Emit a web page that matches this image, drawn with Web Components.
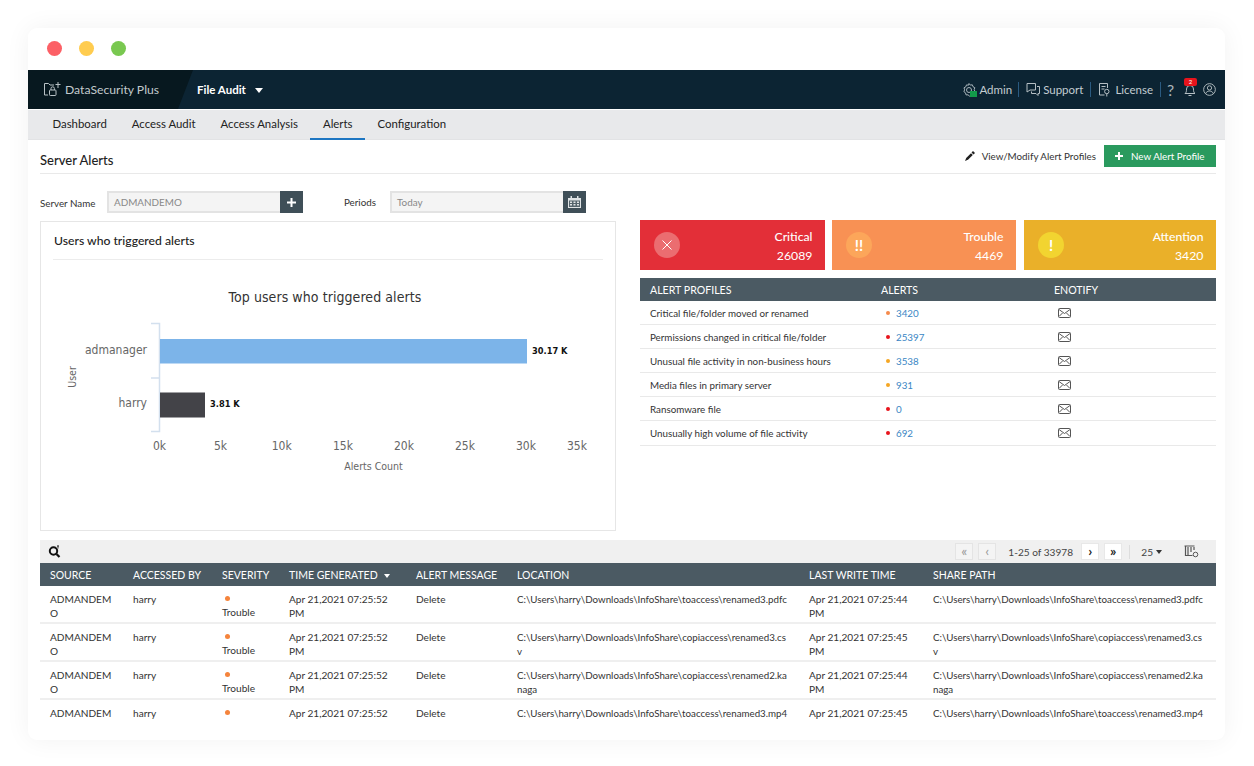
<!DOCTYPE html>
<html lang="en"><head><meta charset="utf-8"><title>DataSecurity Plus</title>
<style>
html,body{margin:0;background:#fff;font-family:Lato,"Liberation Sans",sans-serif;color:#333}
body{width:1254px;height:766px;overflow:hidden;padding:28px 29px 26px 28px;box-sizing:border-box}
</style></head><body>
<ds-window>
  <ds-header></ds-header>
  <ds-nav></ds-nav>
  <ds-main>
    <ds-title></ds-title>
    <ds-form></ds-form>
    <ds-chart></ds-chart>
    <ds-side></ds-side>
    <ds-events></ds-events>
  </ds-main>
</ds-window>
<script>
function def(name, html){
  customElements.define(name, class extends HTMLElement{
    constructor(){super();this.attachShadow({mode:'open'}).innerHTML=typeof html==='function'?html():html;}
  });
}
const envelope=`<svg width="13" height="10" viewBox="0 0 13 10" fill="none" stroke="#555" stroke-width="1"><rect x=".5" y=".5" width="12" height="9" rx="1"/><path d="M1 1.500l5.500 4 5.500-4M1 8.500l3.500-3.500M12 8.500L8.500 5"/></svg>`;

def('ds-window',`<style>
:host{display:flex;flex-direction:column;width:1197px;height:712px;background:#fff;border-radius:9px;overflow:hidden;box-shadow:0 0 26px rgba(0,0,0,.055)}
.bar{display:flex;align-items:center;gap:17px;height:42px;padding:0 0 1px 19px;flex:none;box-sizing:border-box}
i{display:block;width:15px;height:15px;border-radius:50%}
</style><div class="bar"><i style="background:#fc6066"></i><i style="background:#ffcc4f"></i><i style="background:#79c850"></i></div><slot></slot>`);

def('ds-header',`<style>
:host{display:flex;height:39px;flex:none;background:#0c2433;color:#c3ccd1;align-items:center;font-size:11.500px}
.brand{display:flex;align-items:center;align-self:stretch;width:165px;box-sizing:border-box;padding-left:15px;gap:4px;background:#07181f;clip-path:polygon(0 0,100% 0,150px 100%,0 100%);color:#c3cacd;font-size:12.200px;flex:none}
.mod{margin-left:4px;color:#fff;font-size:11.500px;font-weight:700;display:flex;align-items:center;gap:9px}
.mod b{display:block;width:0;height:0;border:4px solid transparent;border-top:5px solid #fff;border-bottom:0;margin-top:2px}
.r{margin-left:auto;display:flex;align-items:center;padding-right:9px}
.r span{display:flex;align-items:center}
.sep{width:1px;height:15px;background:#2a5a80;display:block}
.bell{position:relative}
.badge{position:absolute;left:0;top:-5px;width:13px;height:8px;border-radius:2px;background:#e8141c;color:#fff;font-size:6px;line-height:8px;justify-content:center}
svg{display:block;flex:none}
</style>
<div class="brand"><svg width="18" height="17" viewBox="0 0 18 17" fill="none" stroke="#b9c2c6" stroke-width="1"><path d="M5 14H1.500V2.500h4l1.500 1.500h4"/><rect x="6.500" y="9" width="6.500" height="5.500" rx=".8"/><path d="M8 9V7.500a1.700 1.700 0 0 1 3.400 0V9M15 1v6M12.500 3.500h5"/></svg>DataSecurity Plus</div>
<div class="mod">File Audit<b></b></div>
<div class="r">
<span><svg width="15" height="16" viewBox="0 0 15 16" fill="none" stroke="#a8b3b9" style="margin-right:2px"><path d="M7 1.500l1.300 1.600 2-.3.700 1.900 1.800 1-.6 2 .8 1.800-1.700 1.200-.3 2-2 .1-1.500 1.300-1.500-1.300-2 .1-.4-2L1.900 9.700l.7-1.900-.6-2 1.800-1 .7-1.900 2 .3z"/><circle cx="7" cy="8" r="2.500"/><rect x="8" y="9" width="7" height="6" fill="#129a4a" stroke="none"/></svg>Admin</span><i class="sep" style="margin:0 7px 0 6px"></i>
<span><svg width="14" height="13" viewBox="0 0 14 13" fill="none" stroke="#b5bfc4" style="margin-right:3px"><path d="M1 .5h8.500v6.500H4L1 9z"/><path d="M11 3.500h2.500V10.500H12v2l-2-2H5.500V8.500"/></svg>Support</span><i class="sep" style="margin:0 8px 0 7px"></i>
<span><svg width="11" height="14" viewBox="0 0 11 14" fill="none" stroke="#b5bfc4" style="margin-right:5px"><path d="M5.500 12H.5V.5h8v4.500"/><path d="M2.500 3.500h4M2.500 6h3"/><circle cx="7.800" cy="8.500" r="2.200"/><path d="M7.800 10.700V13.500"/></svg>License</span><i class="sep" style="margin:0 6px 0 7px"></i>
<span style="font-size:16px;color:#aab4ba;width:10px">?</span>
<span class="bell" style="margin-left:7px"><svg width="12" height="14" viewBox="0 0 12 14" fill="none" stroke="#b5bfc4"><path d="M1 10.500c1.300-1 1.500-2 1.500-4.500a3.500 3.500 0 0 1 7 0c0 2.500.2 3.500 1.500 4.500zM4.500 12.500h3"/></svg><span class="badge">2</span></span>
<span style="margin-left:7px"><svg width="13" height="13" viewBox="0 0 14 14" fill="none" stroke="#b9c2c6"><circle cx="7" cy="7" r="6.300"/><circle cx="7" cy="5.300" r="2.300"/><path d="M2.800 11.500c.8-2 2.300-2.800 4.200-2.800s3.400.8 4.200 2.800"/></svg></span>
</div>`);

def('ds-nav',`<style>
:host{display:flex;height:30px;flex:none;margin-top:1px;background:#e8e9eb;padding-left:12px;font-size:11.400px;color:#222;box-sizing:border-box;border-bottom:1px solid #e2e3e5}
a{display:flex;align-items:center;padding:0 12.500px 3px;height:30px;box-sizing:border-box}
a.on{border-bottom:2px solid #1d76c2;padding-bottom:1px}
</style><a>Dashboard</a><a>Access Audit</a><a>Access Analysis</a><a class="on">Alerts</a><a>Configuration</a>`);

def('ds-main',`<style>
:host{display:grid;grid-template-columns:576px 576px;column-gap:24px;padding:0 9px 0 12px;flex:1;min-height:0;align-content:start}
::slotted(ds-title),::slotted(ds-form),::slotted(ds-events){grid-column:1/3}
</style><slot></slot>`);

def('ds-title',`<style>
:host{display:flex;align-items:center;height:33px;border-bottom:1px solid #e9e9e9;color:#333}
h1{font-size:13px;font-weight:500;margin:6px 0 0;color:#222;flex:1}
.e{display:flex;align-items:center;gap:7px;font-size:9.800px;margin:0 8px 2px 0;color:#333}
button{all:unset;display:flex;align-items:center;gap:8px;height:22px;width:112px;box-sizing:border-box;padding-left:11px;margin-bottom:2px;background:#2a9a5e;color:#fff;font:9.800px Lato,sans-serif}
</style><h1>Server Alerts</h1>
<div class="e"><svg width="10" height="10" viewBox="0 0 10 10"><path d="M0 10l1.200-3L6 2.200 7.800 4 3 8.800zM6.500 1.500L8 0l2 2-1.500 1.500z" fill="#222"/></svg>View/Modify Alert Profiles</div>
<button><svg width="8" height="8" viewBox="0 0 8 8"><path d="M3 0h2v3h3v2H5v3H3V5H0V3h3z" fill="#fff"/></svg>New Alert Profile</button>`);

def('ds-form',`<style>
:host{display:flex;align-items:center;height:22px;margin:17px 0 7px;font-size:9.800px;color:#333}
label{width:67px;padding-top:1px}
.f{display:flex;width:196px;height:22px;box-sizing:border-box;background:#f4f4f4;border:2px solid #e3e3e3;border-right:0;color:#888;font-size:9.900px;align-items:center;padding-left:5px;position:relative}
.f b{position:absolute;right:0;top:-2px;width:23px;height:22px;background:#3f4f58;display:flex;align-items:center;justify-content:center}
label.p{width:46px;margin-left:41px;padding-top:0}
</style><label>Server Name</label><div class="f">ADMANDEMO<b><svg width="9" height="9" viewBox="0 0 9 9"><path d="M3.500 0h2v3.500H9v2H5.500V9h-2V5.500H0v-2h3.500z" fill="#fff"/></svg></b></div>
<label class="p">Periods</label><div class="f">Today<b><svg width="13" height="12" viewBox="0 0 13 12"><path d="M0 2h2.500V0h1.500v2h5V0h1.500v2H13v10H0z" fill="#dfe3e5"/><path d="M1 4.500h11v6.500H1z" fill="#55646c"/><path d="M2 5.500h2v1.500H2zM5.500 5.500h2v1.500h-2zM9 5.500h2v1.500H9zM2 8h2v1.500H2zM5.500 8h2v1.500h-2zM9 8h2v1.500H9z" fill="#dfe3e5"/></svg></b></div>`);

def('ds-chart',`<style>
:host{display:block;height:310px;margin-top:1px;border:1px solid #e6e6e6;box-sizing:border-box;position:relative;background:#fff}
h2{margin:0 12px;height:38px;box-sizing:border-box;padding:12px 0 0 1px;border-bottom:1px solid #ececec;font-size:12.200px;font-weight:500;color:#222;line-height:14px}
svg{display:block;position:absolute;left:-1px;top:-1px}
text{font-family:"DejaVu Sans Condensed","DejaVu Sans",sans-serif}
</style><h2>Users who triggered alerts</h2>
<svg width="576" height="310" viewBox="40 221 576 310">
<text x="325" y="302" text-anchor="middle" font-size="14" letter-spacing=".07" fill="#333">Top users who triggered alerts</text>
<path d="M151 323.500h8.500V431.500H151M151 378h8" fill="none" stroke="#d3e0ee" stroke-width="1.500"/>
<rect x="160" y="339" width="367" height="24.500" fill="#7cb4e9"/>
<rect x="160" y="392.500" width="45" height="25" fill="#434348"/>
<g font-size="12" fill="#666" text-anchor="end"><text x="147" y="353.500">admanager</text><text x="147" y="407">harry</text></g>
<text transform="translate(76 377) rotate(-90)" text-anchor="middle" font-size="10.500" fill="#666">User</text>
<g font-size="9.200" font-weight="700" fill="#111"><text x="532" y="353.500">30.17 K</text><text x="210" y="407">3.81 K</text></g>
<g font-size="12" fill="#666" text-anchor="middle"><text x="159.500" y="449.500">0k</text><text x="220.500" y="449.500">5k</text><text x="281.700" y="449.500">10k</text><text x="343" y="449.500">15k</text><text x="404" y="449.500">20k</text><text x="465" y="449.500">25k</text><text x="526" y="449.500">30k</text><text x="577" y="449.500">35k</text></g>
<text x="373.500" y="469.500" text-anchor="middle" font-size="10.500" fill="#666">Alerts Count</text>
</svg>`);

const prof=[["Critical file/folder moved or renamed","#f58a4b","3420"],["Permissions changed in critical file/folder","#e8141c","25397"],["Unusual file activity in non-business hours","#f5a623","3538"],["Media files in primary server","#f5a623","931"],["Ransomware file","#e8141c","0"],["Unusually high volume of file activity","#e8141c","692"]];
def('ds-side',()=>`<style>
:host{display:block;font-size:9.800px;color:#333}
.cards{display:grid;grid-template-columns:185px 184px 193px;column-gap:7px;height:50px}
.c{display:flex;align-items:center;justify-content:space-between;padding:0 12.500px 0 14px;color:#fff;box-sizing:border-box}
.c:last-child{margin-left:1px}
.c u{display:flex;align-items:center;justify-content:center;width:26px;height:26px;border-radius:50%;text-decoration:none;font-size:15px;font-weight:700}
.c div{text-align:right;font-size:12.200px;line-height:19px;font-weight:500;padding-top:2px}
.c div span{display:block;font-weight:400;font-size:12.300px}
.head{display:grid;grid-template-columns:231px 173px auto;margin-top:8px;height:23px;align-items:center;background:#4b5a63;color:#fff;padding-left:10px;font-size:10.600px}
.row{display:grid;grid-template-columns:231px 173px auto;height:24.100px;box-sizing:border-box;border-bottom:1px solid #e9e9e9;align-items:center;padding-left:10px}
.a{display:flex;align-items:center;color:#3a86c4;padding-left:5px;gap:6px}
.a i{width:4px;height:4px;border-radius:50%}
.m{padding-left:4px;display:flex}
</style>
<div class="cards">
<div class="c" style="background:#e32f38"><u style="background:#eb6d70"><svg width="12" height="12" viewBox="0 0 12 12"><path d="M1.500 1.500l9 9M10.500 1.500l-9 9" stroke="#fff" stroke-width="1"/></svg></u><div>Critical<span>26089</span></div></div>
<div class="c" style="background:#f89154"><u style="background:#fca65a">!!</u><div>Trouble<span>4469</span></div></div>
<div class="c" style="background:#eab029"><u style="background:#f2d430">!</u><div>Attention<span>3420</span></div></div>
</div>
<div class="head"><span>ALERT PROFILES</span><span>ALERTS</span><span>ENOTIFY</span></div>
${prof.map(p=>`<div class="row"><span>${p[0]}</span><span class="a"><i style="background:${p[1]}"></i>${p[2]}</span><span class="m">${envelope}</span></div>`).join('')}`);

const ev=[["toaccess\\renamed3.pdfc","44",1],["copiaccess\\renamed3.csv","45",1],["copiaccess\\renamed2.kanaga","44",1],["toaccess\\renamed3.mp4","45",0]];
def('ds-events',()=>`<style>
:host{display:block;margin-top:9px;font-size:10.100px;color:#333}
.tb{display:flex;align-items:center;height:23px;background:#f0f0f0;padding:0 0 0 8px}
.pg{margin-left:auto;display:flex;align-items:center;color:#444}
.pg b{display:flex;width:16px;height:15px;align-items:center;justify-content:center;background:#fff;font-size:14px;font-weight:700;color:#222;margin-right:7px;line-height:1;padding-bottom:1px;box-sizing:border-box;box-shadow:0 0 0 1px #e8e8e8}
.pg b.d{color:#999;background:#f4f4f4;font-weight:400;box-shadow:0 0 0 1px #e4e4e4}
.pg em{font-style:normal;margin:0 12px 0 6px;width:62px;white-space:nowrap}
.pg s{width:1px;height:14px;background:#ddd;margin:0 11px 0 1px}
table{width:1176px;table-layout:fixed;border-collapse:collapse}
th{height:23px;padding:0 0 0 10px;background:#4b5a63;color:#fff;font-weight:400;text-align:left;font-size:10.500px;white-space:nowrap}
th b{display:inline-block;border:3.500px solid transparent;border-top:4px solid #fff;border-bottom:0;margin:0 0 1px 4px}
td{padding:6px 10px 2px 10px;vertical-align:top;line-height:14px;height:28px;border-bottom:2px solid #efefef;word-break:break-all;box-sizing:content-box}
td.n{word-break:normal}
td.p{font-size:9.750px;padding-right:9px}
td.p:last-child{padding-right:12px}
td.s{word-break:normal;line-height:13px}
td.s i{display:block;width:5px;height:5px;border-radius:50%;background:#f5843c;margin:4px 0 5px 3px}
tr.last td{border:0}
</style>
<div class="tb"><svg width="13" height="13" viewBox="0 0 13 13" fill="none" stroke="#111"><circle cx="5.500" cy="6" r="3.700" stroke-width="2"/><path d="M8.500 9l3 3" stroke-width="2.200"/><path d="M10 .5v3M11 1H9" stroke-width=".8"/></svg>
<div class="pg"><b class="d">«</b><b class="d">‹</b><em>1-25 of 33978</em><b>›</b><b>»</b><s></s>25<i style="display:block;border:3.500px solid transparent;border-top:4px solid #333;border-bottom:0;margin:0 22px 0 3px"></i><svg width="15" height="13" viewBox="0 0 15 13" style="margin-right:17px" fill="none" stroke="#555"><path d="M.5 1h10M1.500 1.500v9h7M4 2v8M7 2v5M10 2v3" stroke-width="1.200"/><circle cx="11.500" cy="9.500" r="2.300"/></svg></div></div>
<table><colgroup><col style="width:83px"><col style="width:89px"><col style="width:67px"><col style="width:127px"><col style="width:101px"><col style="width:292px"><col style="width:124px"><col></colgroup>
<tr><th>SOURCE</th><th>ACCESSED BY</th><th>SEVERITY</th><th>TIME GENERATED <b></b></th><th>ALERT MESSAGE</th><th>LOCATION</th><th>LAST WRITE TIME</th><th>SHARE PATH</th></tr>
${ev.map(e=>{const p='C:\\Users\\harry\\Downloads\\InfoShare\\'+e[0];const f=e[2];return `<tr${f?'':' class="last"'}><td>ADMANDEM${f?'O':''}</td><td>harry</td><td class="s"><i></i>${f?'Trouble':''}</td><td class="n">Apr 21,2021 07:25:52${f?' PM':''}</td><td>Delete</td><td class="p">${p}</td><td class="n">Apr 21,2021 07:25:${e[1]}${f?' PM':''}</td><td class="p">${p}</td></tr>`}).join('')}
</table>`);
</script>
</body></html>
